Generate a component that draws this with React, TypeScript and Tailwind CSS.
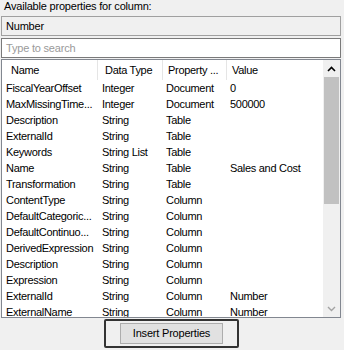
import React from "react";

type Row = { name: string; type: string; prop: string; value: string };

const rows: Row[] = [
  { name: "FiscalYearOffset", type: "Integer", prop: "Document", value: "0" },
  { name: "MaxMissingTime...", type: "Integer", prop: "Document", value: "500000" },
  { name: "Description", type: "String", prop: "Table", value: "" },
  { name: "ExternalId", type: "String", prop: "Table", value: "" },
  { name: "Keywords", type: "String List", prop: "Table", value: "" },
  { name: "Name", type: "String", prop: "Table", value: "Sales and Cost" },
  { name: "Transformation", type: "String", prop: "Table", value: "" },
  { name: "ContentType", type: "String", prop: "Column", value: "" },
  { name: "DefaultCategoric...", type: "String", prop: "Column", value: "" },
  { name: "DefaultContinuo...", type: "String", prop: "Column", value: "" },
  { name: "DerivedExpression", type: "String", prop: "Column", value: "" },
  { name: "Description", type: "String", prop: "Column", value: "" },
  { name: "Expression", type: "String", prop: "Column", value: "" },
  { name: "ExternalId", type: "String", prop: "Column", value: "Number" },
  { name: "ExternalName", type: "String", prop: "Column", value: "Number" },
];

export default function App() {
  return (
    <div className="w-[344px] h-[350px] overflow-hidden bg-[#f0f0f0] font-['Liberation_Sans',Arial,sans-serif] text-[11px] tracking-[-0.2px] text-black">
      {/* Label */}
      <div className="h-[16px] pl-[4px] leading-[13px]">Available properties for column:</div>

      {/* Selected column (read only) */}
      <div className="ml-[1px] w-[340px] h-[20px] border border-[#a0a0a0] bg-[#f0f0f0] pl-[4px] leading-[18px]">
        Number
      </div>

      {/* Search */}
      <div className="ml-[1px] mt-[2px] w-[340px] h-[20px] border border-[#7a7a7a] bg-white pl-[4px] leading-[18px] text-[#9a9a9a]">
        Type to search
      </div>

      {/* List view */}
      <div className="ml-[1px] mt-[1px] w-[340px] h-[259px] border border-[#828790] bg-white flex overflow-hidden tracking-[-0.3px]">
        <div className="flex-1 flex flex-col overflow-hidden">
          <div className="flex h-[20px] shrink-0 leading-[20px]">
            <div className="w-[96px] pl-[9px] border-r border-[#e5e5e5]">Name</div>
            <div className="w-[65px] pl-[7px] border-r border-[#e5e5e5]">Data Type</div>
            <div className="w-[64px] pl-[5px] border-r border-[#e5e5e5] whitespace-nowrap">Property ...</div>
            <div className="flex-1 pl-[5px]">Value</div>
          </div>
          {rows.map((r, i) => (
            <div key={i} className="flex h-[16px] shrink-0 leading-[16px] whitespace-nowrap">
              <div className="w-[96px] pl-[4px] overflow-hidden">{r.name}</div>
              <div className="w-[65px] pl-[4px]">{r.type}</div>
              <div className="w-[64px] pl-[3px]">{r.prop}</div>
              <div className="flex-1 pl-[3px]">{r.value}</div>
            </div>
          ))}
        </div>

        {/* Scrollbar */}
        <div className="w-[17px] shrink-0 bg-[#f0f0f0] flex flex-col">
          <div className="h-[17px] flex items-center justify-center">
            <svg width="9" height="6" viewBox="0 0 9 6">
              <path d="M1 5 L4.5 1.5 L8 5" fill="none" stroke="#000" strokeWidth="1.6" />
            </svg>
          </div>
          <div className="mx-[1px] h-[127px] bg-[#c1c1c1]" />
          <div className="flex-1" />
          <div className="h-[17px] flex items-center justify-center">
            <svg width="9" height="6" viewBox="0 0 9 6">
              <path d="M1 1 L4.5 4.5 L8 1" fill="none" stroke="#a3a3a3" strokeWidth="1.4" />
            </svg>
          </div>
        </div>
      </div>

      {/* Button */}
      <div className="flex justify-center mt-[1px]">
        <div className="ml-[-1px] w-[135px] h-[29px] border-2 border-[#333] rounded-[2px] flex justify-center pt-[2px]">
          <button className="w-[103px] h-[21px] border border-[#adadad] bg-[#e1e1e1] leading-[19px] text-black">
            Insert Properties
          </button>
        </div>
      </div>
    </div>
  );
}
